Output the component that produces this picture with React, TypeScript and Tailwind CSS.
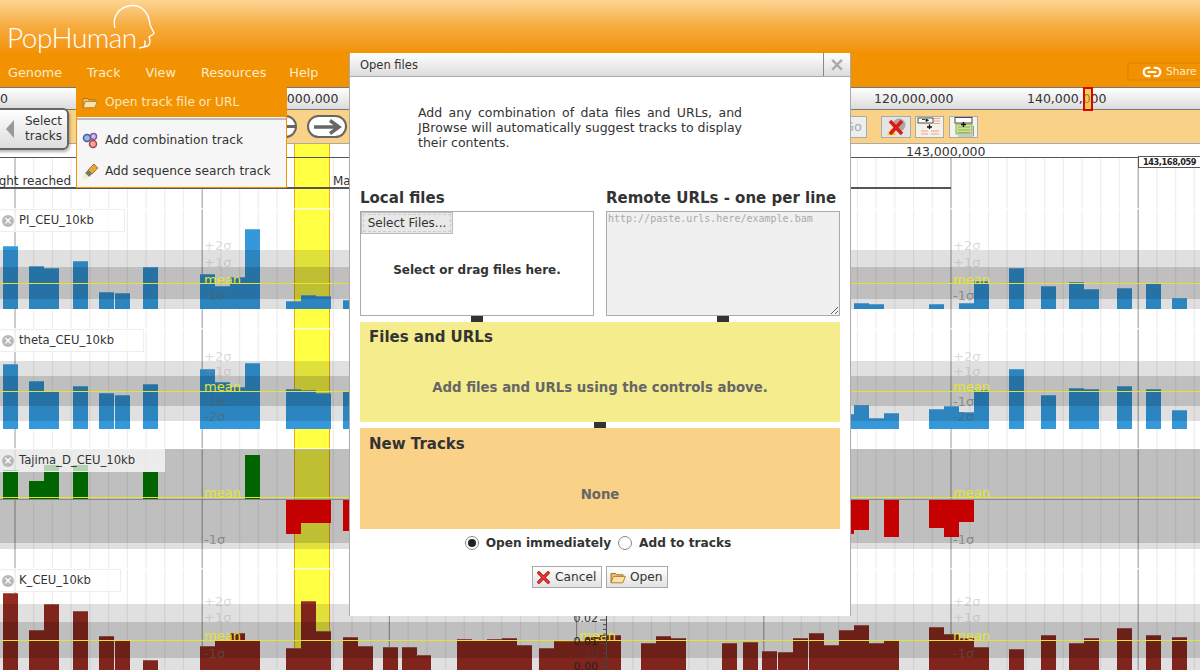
import React from 'react';
import { Link2 } from 'lucide-react';

type Bar = [number, number, number?];

const GRID_X = Array.from({ length: 64 }, (_, i) => i);

const PI_BARS: Bar[] = [
  [3, 246], [29, 266], [44, 268], [73, 261], [99, 292], [115, 293], [143, 267], [200, 274], [215, 286],
  [230, 277], [245, 229], [286, 301], [301, 295], [316, 296], [343, 300],
  [854, 303], [869, 304], [929, 304], [959, 303], [974, 281], [1009, 268], [1041, 286], [1069, 282],
  [1084, 289], [1117, 288], [1146, 283], [1172, 298],
];

const THETA_BARS: Bar[] = [
  [3, 364], [29, 381], [44, 391], [73, 386], [99, 393], [115, 395], [143, 384], [200, 369], [215, 382],
  [230, 387], [245, 363], [286, 389], [301, 390], [316, 393], [343, 391],
  [851, 414, 3], [854, 405], [869, 418], [884, 413], [929, 409], [944, 406], [959, 412], [974, 390],
  [1009, 369], [1041, 395], [1069, 388], [1084, 389], [1117, 386], [1146, 389], [1172, 410],
];

const TAJIMA_UP: Bar[] = [[3, 470], [29, 481], [44, 465], [73, 465], [143, 472], [245, 455]];
const TAJIMA_DOWN: Bar[] = [
  [286, 534], [301, 523], [316, 523], [343, 531], [851, 534, 3], [854, 530], [884, 537], [929, 528],
  [944, 537], [959, 522],
];

const K_BARS: Bar[] = [
  [3, 593], [29, 630], [44, 604], [73, 611], [99, 636], [115, 640], [143, 660], [200, 646], [215, 640],
  [230, 633], [245, 640], [286, 648], [301, 601], [316, 631], [343, 637], [358, 646], [383, 647], [402, 647],
  [416, 655], [457, 639], [472, 640], [487, 639], [502, 638], [517, 645], [539, 648], [554, 641, 31],
  [585, 637], [600, 635, 21], [641, 643], [656, 636], [671, 638], [722, 643], [743, 642], [762, 651],
  [778, 652], [793, 638], [809, 633], [824, 645], [839, 630], [854, 625], [869, 643], [884, 640],
  [929, 627], [944, 634], [959, 638], [974, 647], [1009, 649], [1041, 635], [1069, 643], [1084, 638],
  [1117, 628], [1146, 635], [1172, 637],
];

const Grid: React.FC<{ from: number; to: number }> = ({ from, to }) => (
  <>
    {GRID_X.map(i => {
      const x = 15 + i * 18.72;
      const major = i % 10 === 0;
      return (
        <line key={i} x1={x} x2={x} y1={from} y2={to} stroke={major ? '#a8a8a8' : '#eeeeee'} strokeWidth={1.2} />
      );
    })}
  </>
);

const Highlight: React.FC<{ from: number; to: number }> = ({ from, to }) => (
  <>
    <rect x={294} y={from} width={36} height={to - from} fill="#ffff44" />
    <line x1={294.5} x2={294.5} y1={from} y2={to} stroke="#f5a41f" />
    <line x1={329.5} x2={329.5} y1={from} y2={to} stroke="#f5a41f" />
  </>
);

const Score: React.FC<{ y: number; label: string; dark?: boolean }> = ({ y, label, dark }) => (
  <>
    {[204, 953].map(x => (
      <text
        key={x}
        x={x}
        y={y}
        fontSize={13}
        fill={label === 'mean' ? '#e4e430' : dark ? 'rgba(90,90,90,0.55)' : 'rgba(150,150,150,0.35)'}
      >
        {label}
      </text>
    ))}
  </>
);

const Track: React.FC<{ top: number; name: string; width: string; children: React.ReactNode }> = ({ top, name, width, children }) => (
  <div className="relative h-[120px] shrink-0">
    <svg className="block w-full h-full" viewBox={`0 ${top} 1200 120`}>
      <Grid from={top} to={top + 120} />
      <Highlight from={top} to={top + 120} />
      <rect x={0} y={top} width={1200} height={1.5} fill="#fff" opacity={0.8} />
      {children}
    </svg>
    <div className={`absolute left-0 top-[1px] h-[23px] ${width} flex items-center bg-white/70 border border-[#eeeeee] border-l-0`}>
      <span className="ml-[2px] w-[12px] h-[12px] rounded-full bg-[#b8b8b8] flex items-center justify-center text-white text-[10px] leading-none font-bold">×</span>
      <span className="ml-[5px] pt-[1px] text-[11.6px] text-[#333]">{name}</span>
    </div>
  </div>
);

const Bars: React.FC<{ bars: Bar[]; base: number; fill: string }> = ({ bars, base, fill }) => (
  <>
    {bars.map(([x, top, w]) => (
      <g key={x}>
        <rect x={x} y={top} width={w ?? 15} height={base - top} fill={fill} />
        <rect x={x} y={top} width={w ?? 15} height={1} fill="#fff" opacity={0.25} />
      </g>
    ))}
  </>
);

const Bands: React.FC<{ a: number; b: number; c: number; d: number }> = ({ a, b, c, d }) => (
  <>
    <rect x={0} y={a} width={1200} height={b - a} fill="#000" opacity={0.12} />
    <rect x={0} y={b} width={1200} height={c - b} fill="#000" opacity={0.25} />
    <rect x={0} y={c} width={1200} height={d - c} fill="#000" opacity={0.12} />
  </>
);

const FolderIcon = ({ className = '' }: { className?: string }) => (
  <svg className={className} viewBox="0 0 16 13">
    <path d="M1 11.5V2.5h4.5l1.2 1.3H13v1.6" fill="#e9c07a" stroke="#a8721f" strokeWidth="1" />
    <path d="M1 11.8 3.4 5.4H15.4L12.8 11.8Z" fill="#fbe2ab" stroke="#b97f2a" strokeWidth="1" />
  </svg>
);

const CancelIcon = ({ className = '' }: { className?: string }) => (
  <svg className={className} viewBox="0 0 14 14">
    <path d="M2 2 12 12M12 2 2 12" stroke="#a80f0f" strokeWidth="3.6" strokeLinecap="round" />
    <path d="M2 2 12 12M12 2 2 12" stroke="#ee3b32" strokeWidth="1.8" strokeLinecap="round" />
  </svg>
);

const ToolButton: React.FC<{ children: React.ReactNode; className?: string }> = ({ children, className = '' }) => (
  <div className={`h-[22px] border border-[#aaa] flex items-center justify-center overflow-hidden ${className}`}>{children}</div>
);

export default function App() {
  return (
    <div className="relative w-[1200px] h-[670px] overflow-hidden bg-white text-[#333] font-['DejaVu_Sans',sans-serif]">
      {/* Header */}
      <header className="relative h-[53px] bg-gradient-to-b from-[#fbd592] via-[#f6ab3a] to-[#f39200] flex items-end pl-[7px]">
        <span className="text-white text-[28px] leading-[31px] tracking-[-0.5px] font-light font-['Lato',sans-serif]">PopHuman</span>
        <svg className="absolute left-[110px] top-[3px] w-[50px] h-[50px]" viewBox="110 3 50 50" fill="none" stroke="#fff" strokeWidth="1.4">
          <path d="M115 28C112 18 118 7 131 5.500C143 4.500 149 14 150 25L154 33C154 35 150 36 149 37C151 41 150 46 146 46.500C143 47 147 41 144 41M146 46.500 139 48" />
        </svg>
      </header>

      {/* Menu bar */}
      <nav className="relative h-[34px] bg-[#f39200] flex items-center pl-[8px] pt-[5px] gap-[25px] text-[12.8px] text-[#fdeccd]">
        <span>Genome</span>
        <span>Track</span>
        <span>View</span>
        <span>Resources</span>
        <span className="-ml-[2px]">Help</span>
        <div className="absolute right-0 top-[9px] h-[19px] w-[73px] flex items-center pl-[13px] gap-[4px] border-2 border-r-0 border-[#e68a00] text-[10.6px]">
          <Link2 size={20} strokeWidth={2.6} className="text-white" />
          <span>Share</span>
        </div>
      </nav>

      {/* Overview scale */}
      <div className="relative h-[23px] bg-gradient-to-b from-white to-[#dcdcdc] border-y border-[#777] text-[12.500px] leading-[21px]">
        <span className="absolute left-0">0</span>
        <span className="absolute left-[259px]">100,000,000</span>
        <span className="absolute left-[874px]">120,000,000</span>
        <span className="absolute left-[1027px]">140,000,000</span>
        <div className="absolute left-[1083px] -top-px w-[10px] h-[24px] border-2 border-[#e00000] bg-[#f5b400]/60" />
      </div>

      {/* Navigation toolbar */}
      <div className="h-[33px] bg-[#fad287] flex items-center pl-[257px]">
        <div className="w-[40px] h-[23px] rounded-full border-[2.500px] border-[#666] bg-white flex items-center justify-center">
          <span className="w-[14px] h-[3px] bg-[#666] ml-[22px]" />
        </div>
        <div className="ml-[10px] w-[40px] h-[23px] rounded-full border-[2.500px] border-[#666] bg-white flex items-center justify-center">
          <svg className="w-[30px] h-[16px]" viewBox="0 0 30 16" fill="none" stroke="#666" strokeWidth="3.400">
            <path d="M2 8H27M18 1.500 27 8 18 14.500" />
          </svg>
        </div>
        <ToolButton className="ml-[488px] w-[32px] bg-[#eeeeee] text-[13px] text-[#aaa] !justify-end pr-[4px]">Go</ToolButton>
        <ToolButton className="ml-[14px] w-[30px] bg-[#e4e4e4]">
          <svg className="w-[24px] h-[20px]" viewBox="0 0 24 20">
            <circle cx="15" cy="8" r="6.500" fill="#a8a8a8" />
            <path d="M3 18 8 11 12 18Z" fill="#f5c400" />
            <path d="M6 4 18 17M18 4 6 17" stroke="#dd1a10" strokeWidth="3.500" />
          </svg>
        </ToolButton>
        <ToolButton className="ml-[4px] w-[29px] bg-[#f6f1e6]">
          <svg className="w-[27px] h-[20px]" viewBox="0 0 27 20">
            <rect x="2" y="1" width="15" height="5" fill="#fff" stroke="#222" strokeWidth="0.800" />
            <path d="M6 2.500h3M10 2v2.500l2.500-1.200Z" stroke="#111" fill="#111" strokeWidth="0.800" />
            <path d="M18 1.500h6M18 4h6M18 6.500h6M5 14h7M15 14h8M5 17h7M15 17h8" stroke="#eaa58f" strokeWidth="1" />
            <path d="M13.500 7.500v4.500M11 10h5" stroke="#111" strokeWidth="1.300" />
          </svg>
        </ToolButton>
        <ToolButton className="ml-[5px] w-[29px] bg-[#f4f4ec]">
          <svg className="w-[27px] h-[20px]" viewBox="0 0 27 20">
            <rect x="5" y="0.500" width="17" height="5.500" fill="#fff" stroke="#222" strokeWidth="0.800" />
            <rect x="6" y="7" width="16" height="10" fill="#c9e58f" stroke="#7f9a55" strokeWidth="0.800" />
            <path d="M23.500 9v10H8" fill="none" stroke="#888" strokeWidth="0.800" />
            <path d="M8 10h12M8 13h12M8 15.500h12" stroke="#7f9a55" strokeWidth="0.700" />
            <path d="M13.500 5v5M11 7.500h5" stroke="#111" strokeWidth="1.300" />
          </svg>
        </ToolButton>
      </div>

      {/* Track view */}
      <main className="relative h-[527px] overflow-hidden flex flex-col">
        <div className="relative h-[65px] shrink-0">
          <svg className="block w-full h-full" viewBox="0 143 1200 65">
            <Grid from={158} to={208} />
            <Highlight from={143} to={208} />
            <line x1={0} x2={1200} y1={143.500} y2={143.500} stroke="#aaa" />
            <line x1={0} x2={1200} y1={157.500} y2={157.500} stroke="#555" />
            <line x1={0} x2={951} y1={188} y2={188} stroke="#555" strokeWidth={2} />
            <text x={71} y={185} textAnchor="end" fontSize={12} fill="#333">Max height reached</text>
            <text x={333} y={185} fontSize={12} fill="#333">Max height reached</text>
          </svg>
          <span className="absolute left-[906px] top-[1px] text-[12.500px] leading-[15px]">143,000,000</span>
          <span className="absolute left-[1138px] top-[13px] w-[62px] h-[12px] bg-white border border-[#555] border-r-0 text-[8.2px] tracking-[-0.4px] leading-[11px] font-bold text-center text-[#222]">143,168,059</span>
        </div>

        <Track top={208} name="PI_CEU_10kb" width="w-[125px]">
          <Bars bars={PI_BARS} base={309} fill="#3498db" />
          <Bands a={250} b={267} c={299} d={309} />
          <line x1={0} x2={1200} y1={283.500} y2={283.500} stroke="#e4e430" />
          <Score y={250} label="+2σ" />
          <Score y={267} label="+1σ" />
          <Score y={284} label="mean" />
          <Score y={300} label="-1σ" dark />
        </Track>

        <Track top={328} name="theta_CEU_10kb" width="w-[144px]">
          <Bars bars={THETA_BARS} base={429} fill="#3498db" />
          <Bands a={361} b={376} c={406} d={421} />
          <line x1={0} x2={1200} y1={391.500} y2={391.500} stroke="#e4e430" />
          <Score y={361} label="+2σ" />
          <Score y={376} label="+1σ" />
          <Score y={391} label="mean" />
          <Score y={406} label="-1σ" dark />
          <Score y={421} label="-2σ" dark />
        </Track>

        <Track top={448} name="Tajima_D_CEU_10kb" width="w-[165px]">
          <Bands a={449} b={449} c={543} d={549} />
          {TAJIMA_UP.map(([x, top]) => (
            <rect key={x} x={x} y={top} width={15} height={499 - top} fill="#006400" />
          ))}
          {TAJIMA_DOWN.map(([x, bottom, w]) => (
            <rect key={x} x={x} y={500} width={w ?? 15} height={bottom - 500} fill="#c40000" />
          ))}
          <line x1={0} x2={1200} y1={499.500} y2={499.500} stroke="#888" />
          <line x1={0} x2={1200} y1={497.500} y2={497.500} stroke="#e4e430" />
          <Score y={497} label="mean" />
          <Score y={544} label="-1σ" dark />
        </Track>

        <Track top={568} name="K_CEU_10kb" width="w-[121px]">
          <Bars bars={K_BARS} base={690} fill="#922b21" />
          <Bands a={604} b={622} c={658} d={690} />
          <line x1={0} x2={1200} y1={640.500} y2={640.500} stroke="#e4e430" />
          <Score y={606} label="+2σ" />
          <Score y={622} label="+1σ" />
          <Score y={640} label="mean" />
          <Score y={658} label="-1σ" dark />
          <text x={579} y={640} fontSize={13} fill="#e4e430">mean</text>
          <text x={579} y={658} fontSize={13} fill="rgba(60,60,60,0.55)">-1σ</text>
          <line x1={606.500} x2={606.500} y1={616} y2={670} stroke="#444" />
          {Array.from({ length: 12 }, (_, i) => (
            <line key={i} x1={i % 5 === 0 ? 600 : 603} x2={606} y1={620 + i * 4.700} y2={620 + i * 4.700} stroke="#444" />
          ))}
          <text x={598} y={622} textAnchor="end" fontSize={11} fill="#333">0.02</text>
          <text x={598} y={645} textAnchor="end" fontSize={11} fill="#222">0.01</text>
          <text x={598} y={670} textAnchor="end" fontSize={11} fill="#222">0.00</text>
        </Track>
      </main>

      {/* Select tracks tab */}
      <div className="absolute -left-[3px] top-[108px] w-[72px] h-[42px] rounded-r-md border-2 border-[#666] bg-gradient-to-b from-white to-[#dddddd] shadow-[1px_2px_3px_rgba(0,0,0,0.3)] flex items-center">
        <span className="ml-[7px] w-0 h-0 border-y-[9px] border-y-transparent border-r-[8px] border-r-[#999]" />
        <span className="ml-[11px] text-[12px] leading-[15px] text-center">Select<br />tracks</span>
      </div>

      {/* Track menu */}
      <div className="absolute left-[76px] top-[87px] w-[211px] h-[101px] bg-[#f6f6f6] border border-t-0 border-[#f39200] text-[12.200px]">
        <div className="h-[30px] bg-[#f39200] text-[#fde6bf] flex items-center -mx-px px-[6px]">
          <FolderIcon className="w-[16px] h-[13px]" />
          <span className="ml-[7px]">Open track file or URL</span>
        </div>
        <div className="mt-[1px] border-t-2 border-[#bbb]" />
        <div className="h-[31px] mt-[5px] flex items-center pl-[5px]">
          <svg className="w-[17px] h-[17px]" viewBox="0 0 17 17" fill="none">
            <circle cx="5" cy="6" r="3.500" fill="#9db4e4" stroke="#3f5fa0" strokeWidth="1.500" />
            <circle cx="11.500" cy="4.500" r="3" fill="#d3bdea" stroke="#7d5aa5" strokeWidth="1.500" />
            <circle cx="11" cy="12" r="3.500" fill="#f3a6a6" stroke="#b04040" strokeWidth="1.500" />
          </svg>
          <span className="ml-[6px]">Add combination track</span>
        </div>
        <div className="h-[31px] flex items-center pl-[5px]">
          <svg className="w-[17px] h-[17px]" viewBox="0 0 17 17">
            <path d="M6 7 12 1 16 5 10 11Z" fill="#e0a840" stroke="#a87820" />
            <path d="M6 7 10 11 7 14 3 10Z" fill="#777" />
            <path d="M3 10 7 14 1 16Z" fill="#f5eda8" />
          </svg>
          <span className="ml-[6px]">Add sequence search track</span>
        </div>
      </div>

      {/* Open files dialog */}
      <section className="absolute left-[349px] top-[53px] w-[502px] h-[563px] bg-white border-x border-[#aaa] flex flex-col">
        <div className="h-[24px] shrink-0 bg-gradient-to-b from-white to-[#dcdcdc] border-b border-[#aaa] flex items-center pl-[10px] text-[11.500px] font-medium">
          <span className="pt-[3px]">Open files</span>
          <span className="ml-auto w-[27px] h-full border-l border-[#888] flex items-center justify-center text-[19px] leading-none font-bold text-[#aaa]">×</span>
        </div>

        <p className="mt-[28px] ml-[68px] w-[324px] text-[12.500px] leading-[15px] text-justify">
          Add any combination of data files and URLs, and JBrowse will automatically suggest tracks to display their contents.
        </p>

        <div className="mx-[10px] mt-[37px] w-[480px] flex gap-[12px]">
          <div className="w-[234px] flex flex-col">
            <h2 className="h-[24px] text-[15px] leading-[22px] font-bold whitespace-nowrap">Local files</h2>
            <div className="h-[105px] border border-[#aaa] flex flex-col">
              <button className="w-[92px] h-[22px] shrink-0 bg-[#e8e8e8] border border-[#bbb] text-[12px] text-[#333] outline-1 outline-dashed -outline-offset-3 outline-[#ccc]">Select Files...</button>
              <div className="flex-1 flex items-center justify-center pb-[9px] text-[12px] font-bold">Select or drag files here.</div>
            </div>
          </div>
          <div className="w-[234px] flex flex-col">
            <h2 className="h-[24px] text-[15px] leading-[22px] font-bold whitespace-nowrap">Remote URLs - one per line</h2>
            <textarea
              readOnly
              placeholder="http://paste.urls.here/example.bam"
              className="h-[105px] w-full resize border border-[#aaa] bg-[#f0f0f0] text-[10px] leading-[13px] px-[1px] font-['DejaVu_Sans_Mono',monospace] placeholder:text-[#aaa]"
            />
          </div>
        </div>

        <div className="h-[6px] mx-[10px] flex">
          <span className="ml-[111px] w-[12px] bg-[#333]" />
          <span className="ml-[234px] w-[12px] bg-[#333]" />
        </div>
        <div className="h-[100px] mx-[10px] bg-[#f5ec8d] flex flex-col">
          <h2 className="pl-[9px] pt-[5px] text-[15px] leading-[20px] font-bold">Files and URLs</h2>
          <div className="flex-1 flex items-center justify-center pt-[6px] text-[13.300px] font-bold text-[#666]">Add files and URLs using the controls above.</div>
        </div>
        <div className="h-[6px] mx-[10px] flex">
          <span className="ml-[234px] w-[12px] bg-[#333]" />
        </div>
        <div className="h-[101px] mx-[10px] bg-[#fad287] flex flex-col">
          <h2 className="pl-[9px] pt-[6px] text-[15px] leading-[20px] font-bold">New Tracks</h2>
          <div className="flex-1 flex items-center justify-center pt-[6px] text-[13.300px] font-bold text-[#666]">None</div>
        </div>

        <div className="h-[28px] flex items-center justify-center pr-[4px] text-[12.200px] font-bold">
          <span className="w-[14px] h-[14px] rounded-full border border-[#888] bg-white flex items-center justify-center">
            <span className="w-[8px] h-[8px] rounded-full bg-[#222]" />
          </span>
          <span className="ml-[7px]">Open immediately</span>
          <span className="ml-[7px] w-[14px] h-[14px] rounded-full border border-[#888] bg-white" />
          <span className="ml-[7px]">Add to tracks</span>
        </div>

        <div className="mt-[9px] flex justify-center gap-[4px] text-[12.200px]">
          <button className="w-[70px] h-[22px] border border-[#aaa] bg-gradient-to-b from-white to-[#e2e2e2] flex items-center pl-[4px] gap-[5px]">
            <CancelIcon className="w-[13px] h-[13px]" />
            <span>Cancel</span>
          </button>
          <button className="w-[62px] h-[22px] border border-[#aaa] bg-gradient-to-b from-white to-[#e2e2e2] flex items-center pl-[3px] gap-[4px]">
            <FolderIcon className="w-[16px] h-[13px]" />
            <span>Open</span>
          </button>
        </div>
      </section>
    </div>
  );
}
